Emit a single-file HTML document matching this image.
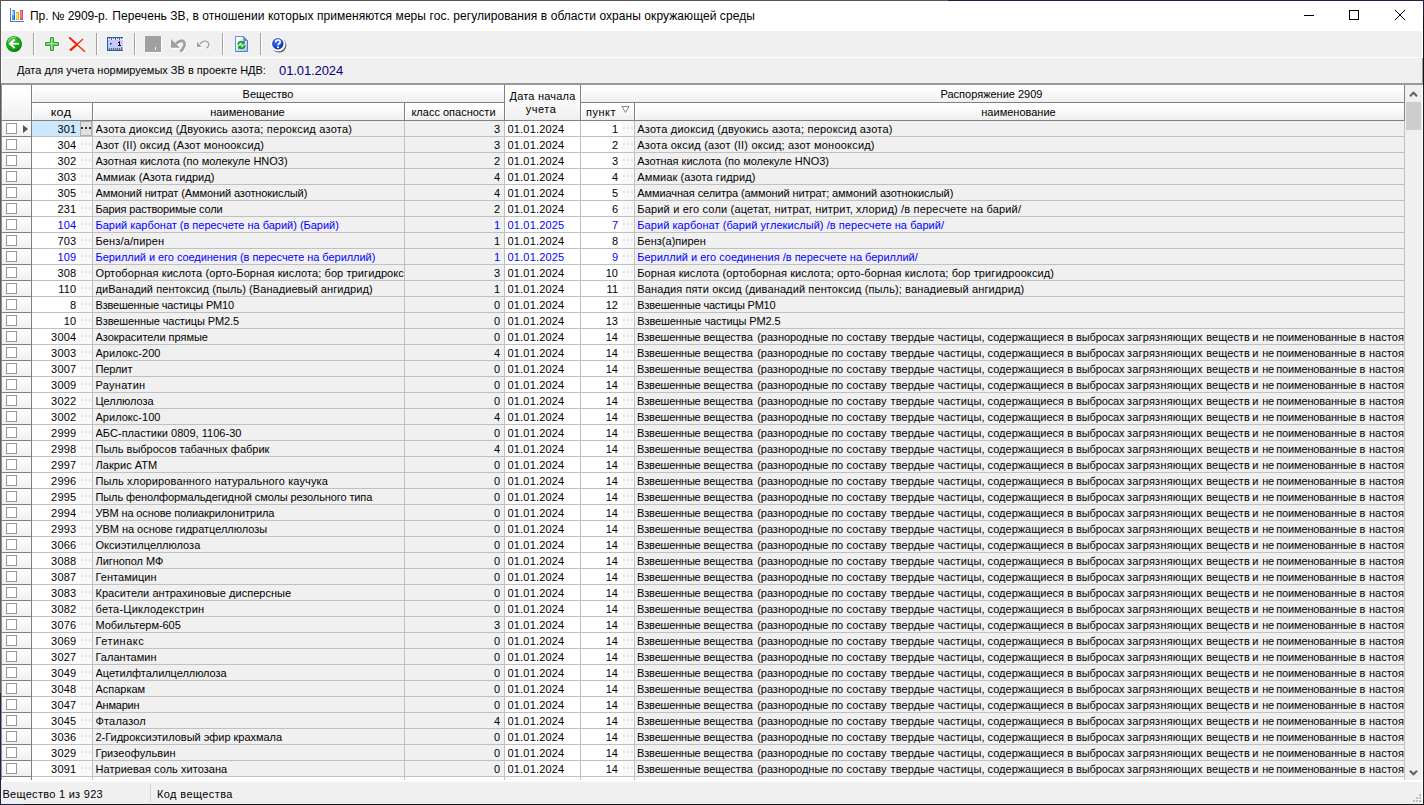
<!DOCTYPE html><html><head><meta charset="utf-8"><title>Пр. № 2909-р</title><style>*{margin:0;padding:0;box-sizing:border-box}
html,body{width:1424px;height:805px;overflow:hidden;background:#f0f0f0}
body{position:relative;font-family:"Liberation Sans",sans-serif;font-size:11px;color:#000;line-height:16px}
.a{position:absolute}
i{position:absolute;display:block;font-style:normal}
span{position:absolute;white-space:nowrap;overflow:hidden}
#tb{left:1px;top:1px;width:1422px;height:30px;background:#fff}
#title{left:30px;top:8px;letter-spacing:0.038px;font-size:12px;line-height:16px;height:16px}
.sep{width:2px;height:22px;top:33px;background:linear-gradient(90deg,#a0a0a0 50%,#fff 50%)}
/* grid */
.hl{background:#808080}
.hc{background:linear-gradient(#ffffff,#fcfcfc 30%,#efefef);border-top:1px solid #fff;border-left:1px solid #fff;text-align:center}
.ht{text-align:center;line-height:13px;overflow:visible}
.r{position:absolute;left:0;width:1424px;height:15px}
.r span{top:0;height:15px;line-height:16px}
.c1{left:32px;width:44.400px;text-align:right;letter-spacing:0.2px}
.c2{left:95.5px;width:308.500px}
.c3{left:405px;width:95px;text-align:right}
.c4{left:507.500px;width:70px;letter-spacing:0.18px}
.c5{left:581px;width:37px;text-align:right}
.c6{left:637.300px;width:766.700px}
.b span{color:#0000ff}
.cb{left:6px;top:2px;width:11px;height:11px;border:1px solid #989898;background:#fff}
.arr{left:23px;top:3.500px;width:0;height:0;border-left:5px solid #555;border-top:4.5px solid transparent;border-bottom:4.5px solid transparent}
.e1,.e2{top:0;width:12px;height:15px;background:#f9f9f9}
.e1{left:80px}.e2{left:622px}
.e1:after,.e2:after{content:"";position:absolute;left:1px;top:6px;width:2px;height:2px;background:#e4e4e4;box-shadow:4px 0 0 #e4e4e4,8px 0 0 #e4e4e4}
.sel .c1{background:#cce8ff;left:32px;width:48px;padding-right:3.600px}
.sel .e1{background:#e1e1e1;border:1px solid #adadad}
.sel .e1:after{left:0;top:5px;background:#333;box-shadow:4px 0 0 #333,8px 0 0 #333}
.c6 b{position:absolute;top:0;font-weight:normal}
.w0{left:-0.2px;letter-spacing:-0.19px}
.w1{left:66.2px;letter-spacing:0.00px}
.w2{left:119.9px;letter-spacing:-0.03px}
.w3{left:194.1px;letter-spacing:-0.30px}
.w4{left:209.2px;letter-spacing:0.12px}
.w5{left:253.2px;letter-spacing:0.12px}
.w6{left:300.5px;letter-spacing:0.15px}
.w7{left:350.3px;letter-spacing:-0.00px}
.w8{left:430.0px;letter-spacing:0.00px}
.w9{left:438.8px;letter-spacing:-0.15px}
.w10{left:489.6px;letter-spacing:0.22px}
.w11{left:568.9px;letter-spacing:0.06px}
.w12{left:615.0px;letter-spacing:0.00px}
.w13{left:625.0px;letter-spacing:-0.30px}
.w14{left:639.0px;letter-spacing:-0.15px}
.w15{left:722.3px;letter-spacing:0.00px}
.w16{left:731.6px;letter-spacing:0.07px}
</style></head><body>
<!-- window frame -->
<div class="a" style="left:0;top:0;width:1424px;height:1px;background:linear-gradient(90deg,#555 0,#555 948px,#1c2340 948px)"></div>
<div class="a" style="left:0;top:0;width:1px;height:805px;background:linear-gradient(#5c5c5c 0,#606060 693px,#1c2340 693px)"></div>
<div class="a" style="left:1423px;top:0;width:1px;height:805px;background:linear-gradient(#1a2040 0,#1a2040 16px,#111 17px,#111 86px,#14201a 87px)"></div>
<div class="a" style="left:0;top:804px;width:1424px;height:1px;background:linear-gradient(90deg,#1c2340 0,#1c2340 24px,#151515 24px)"></div>
<!-- title bar -->
<div id="tb" class="a"></div>
<span id="title" style="letter-spacing:-0.08px">Пр. № 2909-р.</span><span id="title2" style="left:112.300px;top:8px;font-size:12px;line-height:16px;height:16px;letter-spacing:0.068px">Перечень ЗВ, в отношении которых применяются меры гос. регулирования в области охраны окружающей среды</span>
<svg class="a" style="left:8px;top:6px" width="18" height="18" viewBox="0 0 18 18" shape-rendering="crispEdges"><rect x="2" y="2" width="1" height="14" fill="#3c82d2"/><rect x="2" y="15" width="14" height="1" fill="#3c82d2"/>
<rect x="4" y="4" width="3" height="10" fill="#3c86dc"/><rect x="4" y="5" width="1" height="4" fill="#a8dcff"/><rect x="5" y="5" width="1" height="4" fill="#7cc0f8"/><rect x="4" y="9" width="2" height="5" fill="#4a98e8"/><rect x="6" y="10" width="1" height="4" fill="#2c5c98"/>
<rect x="8" y="6" width="3" height="8" fill="#d8a838"/><rect x="9" y="7" width="1" height="7" fill="#ffe858"/><rect x="8" y="7" width="1" height="6" fill="#f8d048"/>
<rect x="12" y="4" width="3" height="10" fill="#c84868"/><rect x="13" y="5" width="1" height="8" fill="#f08aa0"/><rect x="12" y="5" width="1" height="7" fill="#e06884"/></svg>
<svg class="a" style="left:1290px;top:1px" width="132" height="30" viewBox="0 0 132 30"><path d="M14 14.500h10" stroke="#000" stroke-width="1"/><rect x="59.500" y="9.500" width="9" height="9" fill="none" stroke="#000" stroke-width="1"/><path d="M105 9l10 10M115 9l-10 10" stroke="#000" stroke-width="1"/></svg>
<!-- toolbar -->
<div class="a" style="left:1px;top:57px;width:1421px;height:1px;background:#fff"></div>
<div class="a" style="left:1px;top:58px;width:1px;height:25px;background:#fff"></div>
<i class="sep" style="left:33px"></i><i class="sep" style="left:96px"></i><i class="sep" style="left:134px"></i><i class="sep" style="left:222px"></i><i class="sep" style="left:260px"></i>
<svg class="a" style="left:5px;top:35px" width="18" height="18" viewBox="0 0 18 18"><defs><radialGradient id="gg" cx="0.38" cy="0.25" r="0.75"><stop offset="0" stop-color="#58c848"/><stop offset="0.55" stop-color="#18a818"/><stop offset="0.85" stop-color="#0c9a0c"/><stop offset="1" stop-color="#086808"/></radialGradient></defs><circle cx="9" cy="9" r="8.600" fill="#fff" opacity="0.600"/><circle cx="9" cy="9" r="8" fill="url(#gg)"/><path d="M3.500 6.500a6 6 0 0 1 7-4" stroke="#b8f0a8" stroke-width="1" fill="none" opacity="0.700"/><path d="M9.700 4.500L4.900 8.750L9.700 13" stroke="#fff" stroke-width="2" fill="none"/><path d="M5 8.750h9" stroke="#fff" stroke-width="1.700"/></svg>
<svg class="a" style="left:44px;top:36px" width="16" height="16" viewBox="0 0 16 16"><path d="M6.500 1.500h3v5h5v3h-5v5h-3v-5h-5v-3h5z" fill="#6cdc6c" stroke="#fff" stroke-width="2.400" opacity="0.500"/><path d="M6.500 1.500h3v5h5v3h-5v5h-3v-5h-5v-3h5z" fill="#62d662" stroke="#34a034" stroke-width="1" stroke-linejoin="round"/><path d="M7.500 2.500v11M2.500 7.500h11" stroke="#98ec98" stroke-width="1"/></svg>
<svg class="a" style="left:68px;top:36px" width="19" height="17" viewBox="0 0 19 17"><g fill="#ee2200" stroke="none"><path d="M0.500 2L1.900 0.700L10 8L8.600 9.400z"/><path d="M8.300 7.700L9.900 9.100L2.900 15.300L1.200 13.500z"/></g><path d="M9 8.500L17 15.800" stroke="#ee2200" stroke-width="1.200"/><path d="M15 3L9 8.500" stroke="#ee2200" stroke-width="1.100"/></svg>
<svg class="a" style="left:106px;top:36px" width="18" height="16" viewBox="0 0 18 16" shape-rendering="crispEdges"><rect x="0" y="0" width="18" height="16" fill="#fff8f0" opacity="0.800"/><g transform="translate(1 1)"><rect x="0" y="0" width="16" height="14" fill="#c8c8ff"/><rect x="1" y="1" width="15" height="2" fill="#e8e8ff"/><rect x="1" y="11" width="15" height="2" fill="#b8b8f8"/><rect x="0" y="0" width="16" height="1" fill="#0060d0"/><rect x="0" y="0" width="1" height="14" fill="#0060d0"/><rect x="0" y="13" width="16" height="1" fill="#0060d0"/>
<g fill="#706850"><rect x="2" y="1" width="1" height="1"/><rect x="4" y="1" width="1" height="2"/><rect x="6" y="1" width="1" height="1"/><rect x="8" y="1" width="1" height="2"/><rect x="10" y="1" width="1" height="1"/><rect x="12" y="1" width="1" height="2"/><rect x="14" y="1" width="1" height="1"/>
<rect x="2" y="11" width="1" height="2"/><rect x="4" y="11" width="1" height="2"/><rect x="6" y="11" width="1" height="2"/><rect x="8" y="11" width="1" height="2"/><rect x="10" y="11" width="1" height="2"/><rect x="12" y="11" width="1" height="2"/><rect x="14" y="10" width="1" height="3"/></g>
<g fill="#000"><rect x="12" y="4" width="1" height="5"/><rect x="11" y="5" width="1" height="1"/><rect x="11" y="8" width="3" height="1"/></g><rect x="12" y="4" width="1" height="1" fill="#404060"/><rect x="3" y="6" width="2" height="1" fill="#0060d0"/><rect x="3" y="7" width="1" height="1" fill="#0060d0"/></g></svg>
<svg class="a" style="left:145px;top:36px" width="18" height="18" viewBox="0 0 18 18" shape-rendering="crispEdges"><rect x="1" y="1" width="16" height="16" fill="#fff"/><rect width="16" height="16" fill="#a0a0a0"/><rect x="10" y="11" width="1" height="3" fill="#fff"/></svg>
<svg class="a" style="left:170px;top:38px" width="18" height="16" viewBox="0 0 18 16"><g transform="translate(1 1)" fill="#fff" stroke="#fff"><path d="M1 1v8.800h8.800z" stroke="none"/><path d="M6 6C8.500 3 11 2.600 12.500 2.900C14.500 3.500 15 6 14.300 8C13.600 10 12.300 12 10.400 13.700" fill="none" stroke-width="2.700"/></g><g fill="#a0a0a0" stroke="#a0a0a0"><path d="M1 1v8.800h8.800z" stroke="none"/><path d="M6 6C8.500 3 11 2.600 12.500 2.900C14.500 3.500 15 6 14.300 8C13.600 10 12.300 12 10.400 13.700" fill="none" stroke-width="2.700"/></g></svg>
<svg class="a" style="left:196px;top:40px" width="16" height="11" viewBox="0 0 16 11"><g transform="translate(1 1)" fill="#fff" stroke="#fff"><path d="M1 2v5h4.800z" stroke="none"/><path d="M4 4C6 1.500 9 0.800 11 1.600C13 2.500 13.300 5 12.500 6.200C12 7 11.500 7.500 10.600 8.100" fill="none" stroke-width="1.300"/></g><g fill="#a0a0a0" stroke="#a0a0a0"><path d="M1 2v5h4.800z" stroke="none"/><path d="M4 4C6 1.500 9 0.800 11 1.600C13 2.500 13.300 5 12.500 6.200C12 7 11.500 7.500 10.600 8.100" fill="none" stroke-width="1.300"/></g></svg>
<svg class="a" style="left:235px;top:36px" width="13" height="16" viewBox="0 0 13 16"><defs><linearGradient id="dg" x1="0" y1="0" x2="1" y2="1"><stop offset="0.200" stop-color="#ffffff"/><stop offset="1" stop-color="#8cc8f4"/></linearGradient></defs><path d="M0.500 0.500h8l4 4v11h-12z" fill="url(#dg)" stroke="#6a6cc4"/><path d="M0.500 15.500v-15h8" fill="none" stroke="#6c8cdc"/><path d="M8.500 0.500v4h4z" fill="#58a8f0" stroke="#6a6cc4" stroke-width="0.600"/><path d="M2.300 8.800C2.300 5.200 6.500 3.800 8.500 5.600L9.700 4.200V8.300H5.700L7.200 6.900C6 6 4.200 7 4.300 8.800zM10.600 9.300C10.600 12.900 6.400 14.300 4.400 12.500L3.200 13.900V9.800H7.200L5.700 11.200C6.900 12.100 8.700 11.100 8.600 9.300z" fill="#10a010"/></svg>
<svg class="a" style="left:269.4px;top:35.2px" width="19" height="19" viewBox="0 0 19 19"><defs><radialGradient id="bg" cx="0.400" cy="0.300" r="0.800"><stop offset="0" stop-color="#4a78e8"/><stop offset="0.700" stop-color="#1440c8"/><stop offset="1" stop-color="#0c2c98"/></radialGradient></defs><circle cx="10" cy="10.300" r="7.300" fill="#484848"/><circle cx="9.200" cy="9.300" r="7.300" fill="#fff"/><circle cx="8.800" cy="8.700" r="5.700" fill="url(#bg)"/><path d="M6.700 7.200C6.700 4.300 11.200 4.300 11.200 6.900C11.200 8.500 9.200 8.600 9.100 10.200" stroke="#fff" stroke-width="1.700" fill="none"/><circle cx="9" cy="12.200" r="1" fill="#fff"/></svg>
<!-- date panel -->
<span style="left:17px;top:62px;height:16px">Дата для учета нормируемых ЗВ в проекте НДВ:</span>
<span style="left:279px;top:62px;height:18px;font-size:13px;line-height:18px;color:#000080;letter-spacing:-0.1px">01.01.2024</span>
<!-- grid frame -->
<div class="a" style="left:1px;top:83px;width:1421px;height:2px;background:#999"></div>
<div class="a" style="left:1px;top:85px;width:1px;height:696px;background:#8e8e8e"></div>
<div class="a" style="left:1422px;top:31px;width:1px;height:773px;background:linear-gradient(#fff 0,#fff 27px,#a0a0a0 27px,#a0a0a0 54px,#fff 54px)"></div>
<!-- data area bg -->
<div class="a" style="left:2px;top:121px;width:1402px;height:659px;background:#fff"></div>
<div class="a" style="left:93px;top:121px;width:311px;height:656px;background:#f0f0f0"></div>
<div class="a" style="left:405px;top:121px;width:99px;height:656px;background:#f0f0f0"></div>
<div class="a" style="left:635px;top:121px;width:769px;height:656px;background:#f0f0f0"></div>
<div class="a" style="left:80px;top:121px;width:12px;height:656px;background:#f9f9f9"></div>
<div class="a" style="left:622px;top:121px;width:12px;height:656px;background:#f9f9f9"></div>
<!-- indicator col gradient cells + h lines -->
<div class="a" style="left:2px;top:121px;width:29px;height:659px;background:repeating-linear-gradient(#fff 0,#fdfdfd 2px,#f0f0f0 15px,#808080 15px,#808080 16px)"></div>
<div class="a" style="left:32px;top:121px;width:1372px;height:656px;background:repeating-linear-gradient(transparent 0,transparent 15px,#c0c0c0 15px,#c0c0c0 16px)"></div>
<!-- v lines data -->
<i style="left:92px;top:121px;width:1px;height:659px;background:#c0c0c0"></i>
<i style="left:404px;top:121px;width:1px;height:659px;background:#c0c0c0"></i>
<i style="left:504px;top:121px;width:1px;height:659px;background:#c0c0c0"></i>
<i style="left:580px;top:121px;width:1px;height:659px;background:#c0c0c0"></i>
<i style="left:634px;top:121px;width:1px;height:659px;background:#c0c0c0"></i>
<i style="left:1404px;top:85px;width:1px;height:695px;background:#c0c0c0"></i>
<i class="hl" style="left:31px;top:85px;width:1px;height:695px"></i>
<!-- header -->
<div class="a hc" style="left:2px;top:85px;width:29px;height:35px"></div>
<div class="a hc" style="left:32px;top:85px;width:472px;height:17px"></div>
<div class="a hc" style="left:32px;top:103px;width:60px;height:17px"></div>
<div class="a hc" style="left:93px;top:103px;width:311px;height:17px"></div>
<div class="a hc" style="left:405px;top:103px;width:99px;height:17px"></div>
<div class="a hc" style="left:505px;top:85px;width:75px;height:35px"></div>
<div class="a hc" style="left:581px;top:85px;width:823px;height:17px"></div>
<div class="a hc" style="left:581px;top:103px;width:53px;height:17px"></div>
<div class="a hc" style="left:635px;top:103px;width:769px;height:17px"></div>
<i class="hl" style="left:2px;top:120px;width:1403px;height:1px"></i>
<i class="hl" style="left:32px;top:102px;width:472px;height:1px"></i>
<i class="hl" style="left:581px;top:102px;width:824px;height:1px"></i>
<i class="hl" style="left:92px;top:103px;width:1px;height:18px"></i>
<i class="hl" style="left:404px;top:103px;width:1px;height:18px"></i>
<i class="hl" style="left:504px;top:85px;width:1px;height:36px"></i>
<i class="hl" style="left:580px;top:85px;width:1px;height:36px"></i>
<i class="hl" style="left:634px;top:103px;width:1px;height:18px"></i>
<i class="hl" style="left:1404px;top:85px;width:1px;height:36px"></i>
<span class="ht" style="left:32px;top:88px;width:472px;height:14px">Вещество</span>
<span class="ht" style="left:32px;top:106px;width:58px;height:14px;transform:scaleX(1.14);letter-spacing:0.3px">код</span>
<span class="ht" style="left:92px;top:106px;width:311px;height:14px">наименование</span>
<span class="ht" style="left:404px;top:106px;width:99px;height:14px">класс опасности</span>
<span class="ht" style="left:505px;top:90px;width:75px;height:28px;white-space:normal"><b style="font-weight:normal;letter-spacing:0.2px">Дата начала</b><br><b style="font-weight:normal;letter-spacing:0.5px;margin-left:-3px">учета</b></span>
<span class="ht" style="left:580px;top:88px;width:823px;height:14px">Распоряжение 2909</span>
<span class="ht" style="left:586px;top:106px;width:40px;height:14px;text-align:left;letter-spacing:0.5px">пункт</span>
<svg class="a" style="left:621px;top:105.300px" width="9" height="9" viewBox="0 0 9 9"><path d="M1 1.500h7l-3.500 6z" fill="#fff" stroke="#808080" stroke-width="1"/></svg>
<span class="ht" style="left:634px;top:106px;width:769px;height:14px">наименование</span>
<!-- scrollbar -->
<div class="a" style="left:1405px;top:85px;width:17px;height:696px;background:#f0f0f0"></div>
<div class="a" style="left:1406px;top:102px;width:15px;height:28px;background:#cdcdcd"></div>
<svg class="a" style="left:1409px;top:90px" width="9" height="8" viewBox="0 0 9 8"><path d="M1 6.200L4.500 2.700L8 6.200" stroke="#606060" stroke-width="2" fill="none"/></svg>
<svg class="a" style="left:1409px;top:768px" width="9" height="9" viewBox="0 0 9 9"><path d="M1 2.800L4.500 6.300L8 2.800" stroke="#606060" stroke-width="2" fill="none"/></svg>

<div id="rows">
<div class="r sel" style="top:121px"><i class="cb"></i><i class="arr"></i><span class="c1">301</span><i class="e1"></i><span class="c2" style="letter-spacing:0.227px">Азота диоксид (Двуокись азота; пероксид азота)</span><span class="c3">3</span><span class="c4">01.01.2024</span><span class="c5">1</span><i class="e2"></i><span class="c6" style="letter-spacing:0.222px">Азота диоксид (двуокись азота; пероксид азота)</span></div>
<div class="r" style="top:137px"><i class="cb"></i><span class="c1">304</span><i class="e1"></i><span class="c2" style="letter-spacing:0.161px">Азот (II) оксид (Азот монооксид)</span><span class="c3">3</span><span class="c4">01.01.2024</span><span class="c5">2</span><i class="e2"></i><span class="c6" style="letter-spacing:0.205px">Азота оксид (азот (II) оксид; азот монооксид)</span></div>
<div class="r" style="top:153px"><i class="cb"></i><span class="c1">302</span><i class="e1"></i><span class="c2">Азотная кислота (по молекуле HNO3)</span><span class="c3">2</span><span class="c4">01.01.2024</span><span class="c5">3</span><i class="e2"></i><span class="c6" style="letter-spacing:-0.012px">Азотная кислота (по молекуле HNO3)</span></div>
<div class="r" style="top:169px"><i class="cb"></i><span class="c1">303</span><i class="e1"></i><span class="c2" style="letter-spacing:0.080px">Аммиак (Азота гидрид)</span><span class="c3">4</span><span class="c4">01.01.2024</span><span class="c5">4</span><i class="e2"></i><span class="c6" style="letter-spacing:0.100px">Аммиак (азота гидрид)</span></div>
<div class="r" style="top:185px"><i class="cb"></i><span class="c1">305</span><i class="e1"></i><span class="c2" style="letter-spacing:-0.106px">Аммоний нитрат (Аммоний азотнокислый)</span><span class="c3">4</span><span class="c4">01.01.2024</span><span class="c5">5</span><i class="e2"></i><span class="c6" style="letter-spacing:-0.105px">Аммиачная селитра (аммоний нитрат; аммоний азотнокислый)</span></div>
<div class="r" style="top:201px"><i class="cb"></i><span class="c1">231</span><i class="e1"></i><span class="c2" style="letter-spacing:-0.143px">Бария растворимые соли</span><span class="c3">2</span><span class="c4">01.01.2024</span><span class="c5">6</span><i class="e2"></i><span class="c6" style="letter-spacing:0.180px">Барий и его соли (ацетат, нитрат, нитрит, хлорид) /в пересчете на барий/</span></div>
<div class="r b" style="top:217px"><i class="cb"></i><span class="c1">104</span><i class="e1"></i><span class="c2" style="letter-spacing:-0.014px">Барий карбонат (в пересчете на барий) (Барий)</span><span class="c3">1</span><span class="c4">01.01.2025</span><span class="c5">7</span><i class="e2"></i><span class="c6" style="letter-spacing:0.062px">Барий карбонат (барий углекислый) /в пересчете на барий/</span></div>
<div class="r" style="top:233px"><i class="cb"></i><span class="c1">703</span><i class="e1"></i><span class="c2" style="letter-spacing:0.127px">Бенз/а/пирен</span><span class="c3">1</span><span class="c4">01.01.2024</span><span class="c5">8</span><i class="e2"></i><span class="c6" style="letter-spacing:0.018px">Бенз(а)пирен</span></div>
<div class="r b" style="top:249px"><i class="cb"></i><span class="c1">109</span><i class="e1"></i><span class="c2" style="letter-spacing:-0.044px">Бериллий и его соединения (в пересчете на бериллий)</span><span class="c3">1</span><span class="c4">01.01.2025</span><span class="c5">9</span><i class="e2"></i><span class="c6" style="letter-spacing:-0.008px">Бериллий и его соединения /в пересчете на бериллий/</span></div>
<div class="r" style="top:265px"><i class="cb"></i><span class="c1">308</span><i class="e1"></i><span class="c2" style="letter-spacing:0.093px">Ортоборная кислота (орто-Борная кислота; бор тригидрокс</span><span class="c3">3</span><span class="c4">01.01.2024</span><span class="c5">10</span><i class="e2"></i><span class="c6" style="letter-spacing:0.103px">Борная кислота (ортоборная кислота; орто-борная кислота; бор тригидрооксид)</span></div>
<div class="r" style="top:281px"><i class="cb"></i><span class="c1">110</span><i class="e1"></i><span class="c2" style="letter-spacing:0.072px">диВанадий пентоксид (пыль) (Ванадиевый ангидрид)</span><span class="c3">1</span><span class="c4">01.01.2024</span><span class="c5">11</span><i class="e2"></i><span class="c6" style="letter-spacing:0.116px">Ванадия пяти оксид (диванадий пентоксид (пыль); ванадиевый ангидрид)</span></div>
<div class="r" style="top:297px"><i class="cb"></i><span class="c1">8</span><i class="e1"></i><span class="c2" style="letter-spacing:-0.200px">Взвешенные частицы PM10</span><span class="c3">0</span><span class="c4">01.01.2024</span><span class="c5">12</span><i class="e2"></i><span class="c6" style="letter-spacing:-0.209px">Взвешенные частицы PM10</span></div>
<div class="r" style="top:313px"><i class="cb"></i><span class="c1">10</span><i class="e1"></i><span class="c2" style="letter-spacing:-0.104px">Взвешенные частицы PM2.5</span><span class="c3">0</span><span class="c4">01.01.2024</span><span class="c5">13</span><i class="e2"></i><span class="c6" style="letter-spacing:-0.113px">Взвешенные частицы PM2.5</span></div>
<div class="r" style="top:329px"><i class="cb"></i><span class="c1">3004</span><i class="e1"></i><span class="c2" style="letter-spacing:-0.022px">Азокрасители прямые</span><span class="c3">0</span><span class="c4">01.01.2024</span><span class="c5">14</span><i class="e2"></i><span class="c6"><b class="w0">Взвешенные</b><b class="w1">вещества</b><b class="w2">(разнородные</b><b class="w3">по</b><b class="w4">составу</b><b class="w5">твердые</b><b class="w6">частицы,</b><b class="w7">содержащиеся</b><b class="w8">в</b><b class="w9">выбросах</b><b class="w10">загрязняющих</b><b class="w11">веществ</b><b class="w12">и</b><b class="w13">не</b><b class="w14">поименованные</b><b class="w15">в</b><b class="w16">настоя</b></span></div>
<div class="r" style="top:345px"><i class="cb"></i><span class="c1">3003</span><i class="e1"></i><span class="c2" style="letter-spacing:0.020px">Арилокс-200</span><span class="c3">4</span><span class="c4">01.01.2024</span><span class="c5">14</span><i class="e2"></i><span class="c6"><b class="w0">Взвешенные</b><b class="w1">вещества</b><b class="w2">(разнородные</b><b class="w3">по</b><b class="w4">составу</b><b class="w5">твердые</b><b class="w6">частицы,</b><b class="w7">содержащиеся</b><b class="w8">в</b><b class="w9">выбросах</b><b class="w10">загрязняющих</b><b class="w11">веществ</b><b class="w12">и</b><b class="w13">не</b><b class="w14">поименованные</b><b class="w15">в</b><b class="w16">настоя</b></span></div>
<div class="r" style="top:361px"><i class="cb"></i><span class="c1">3007</span><i class="e1"></i><span class="c2" style="letter-spacing:-0.080px">Перлит</span><span class="c3">0</span><span class="c4">01.01.2024</span><span class="c5">14</span><i class="e2"></i><span class="c6"><b class="w0">Взвешенные</b><b class="w1">вещества</b><b class="w2">(разнородные</b><b class="w3">по</b><b class="w4">составу</b><b class="w5">твердые</b><b class="w6">частицы,</b><b class="w7">содержащиеся</b><b class="w8">в</b><b class="w9">выбросах</b><b class="w10">загрязняющих</b><b class="w11">веществ</b><b class="w12">и</b><b class="w13">не</b><b class="w14">поименованные</b><b class="w15">в</b><b class="w16">настоя</b></span></div>
<div class="r" style="top:377px"><i class="cb"></i><span class="c1">3009</span><i class="e1"></i><span class="c2" style="letter-spacing:0.286px">Раунатин</span><span class="c3">0</span><span class="c4">01.01.2024</span><span class="c5">14</span><i class="e2"></i><span class="c6"><b class="w0">Взвешенные</b><b class="w1">вещества</b><b class="w2">(разнородные</b><b class="w3">по</b><b class="w4">составу</b><b class="w5">твердые</b><b class="w6">частицы,</b><b class="w7">содержащиеся</b><b class="w8">в</b><b class="w9">выбросах</b><b class="w10">загрязняющих</b><b class="w11">веществ</b><b class="w12">и</b><b class="w13">не</b><b class="w14">поименованные</b><b class="w15">в</b><b class="w16">настоя</b></span></div>
<div class="r" style="top:393px"><i class="cb"></i><span class="c1">3022</span><i class="e1"></i><span class="c2" style="letter-spacing:-0.050px">Целлюлоза</span><span class="c3">0</span><span class="c4">01.01.2024</span><span class="c5">14</span><i class="e2"></i><span class="c6"><b class="w0">Взвешенные</b><b class="w1">вещества</b><b class="w2">(разнородные</b><b class="w3">по</b><b class="w4">составу</b><b class="w5">твердые</b><b class="w6">частицы,</b><b class="w7">содержащиеся</b><b class="w8">в</b><b class="w9">выбросах</b><b class="w10">загрязняющих</b><b class="w11">веществ</b><b class="w12">и</b><b class="w13">не</b><b class="w14">поименованные</b><b class="w15">в</b><b class="w16">настоя</b></span></div>
<div class="r" style="top:409px"><i class="cb"></i><span class="c1">3002</span><i class="e1"></i><span class="c2" style="letter-spacing:0.020px">Арилокс-100</span><span class="c3">4</span><span class="c4">01.01.2024</span><span class="c5">14</span><i class="e2"></i><span class="c6"><b class="w0">Взвешенные</b><b class="w1">вещества</b><b class="w2">(разнородные</b><b class="w3">по</b><b class="w4">составу</b><b class="w5">твердые</b><b class="w6">частицы,</b><b class="w7">содержащиеся</b><b class="w8">в</b><b class="w9">выбросах</b><b class="w10">загрязняющих</b><b class="w11">веществ</b><b class="w12">и</b><b class="w13">не</b><b class="w14">поименованные</b><b class="w15">в</b><b class="w16">настоя</b></span></div>
<div class="r" style="top:425px"><i class="cb"></i><span class="c1">2999</span><i class="e1"></i><span class="c2" style="letter-spacing:0.024px">АБС-пластики 0809, 1106-30</span><span class="c3">0</span><span class="c4">01.01.2024</span><span class="c5">14</span><i class="e2"></i><span class="c6"><b class="w0">Взвешенные</b><b class="w1">вещества</b><b class="w2">(разнородные</b><b class="w3">по</b><b class="w4">составу</b><b class="w5">твердые</b><b class="w6">частицы,</b><b class="w7">содержащиеся</b><b class="w8">в</b><b class="w9">выбросах</b><b class="w10">загрязняющих</b><b class="w11">веществ</b><b class="w12">и</b><b class="w13">не</b><b class="w14">поименованные</b><b class="w15">в</b><b class="w16">настоя</b></span></div>
<div class="r" style="top:441px"><i class="cb"></i><span class="c1">2998</span><i class="e1"></i><span class="c2" style="letter-spacing:0.007px">Пыль выбросов табачных фабрик</span><span class="c3">4</span><span class="c4">01.01.2024</span><span class="c5">14</span><i class="e2"></i><span class="c6"><b class="w0">Взвешенные</b><b class="w1">вещества</b><b class="w2">(разнородные</b><b class="w3">по</b><b class="w4">составу</b><b class="w5">твердые</b><b class="w6">частицы,</b><b class="w7">содержащиеся</b><b class="w8">в</b><b class="w9">выбросах</b><b class="w10">загрязняющих</b><b class="w11">веществ</b><b class="w12">и</b><b class="w13">не</b><b class="w14">поименованные</b><b class="w15">в</b><b class="w16">настоя</b></span></div>
<div class="r" style="top:457px"><i class="cb"></i><span class="c1">2997</span><i class="e1"></i><span class="c2" style="letter-spacing:0.044px">Лакрис АТМ</span><span class="c3">0</span><span class="c4">01.01.2024</span><span class="c5">14</span><i class="e2"></i><span class="c6"><b class="w0">Взвешенные</b><b class="w1">вещества</b><b class="w2">(разнородные</b><b class="w3">по</b><b class="w4">составу</b><b class="w5">твердые</b><b class="w6">частицы,</b><b class="w7">содержащиеся</b><b class="w8">в</b><b class="w9">выбросах</b><b class="w10">загрязняющих</b><b class="w11">веществ</b><b class="w12">и</b><b class="w13">не</b><b class="w14">поименованные</b><b class="w15">в</b><b class="w16">настоя</b></span></div>
<div class="r" style="top:473px"><i class="cb"></i><span class="c1">2996</span><i class="e1"></i><span class="c2" style="letter-spacing:0.118px">Пыль хлорированного натурального каучука</span><span class="c3">0</span><span class="c4">01.01.2024</span><span class="c5">14</span><i class="e2"></i><span class="c6"><b class="w0">Взвешенные</b><b class="w1">вещества</b><b class="w2">(разнородные</b><b class="w3">по</b><b class="w4">составу</b><b class="w5">твердые</b><b class="w6">частицы,</b><b class="w7">содержащиеся</b><b class="w8">в</b><b class="w9">выбросах</b><b class="w10">загрязняющих</b><b class="w11">веществ</b><b class="w12">и</b><b class="w13">не</b><b class="w14">поименованные</b><b class="w15">в</b><b class="w16">настоя</b></span></div>
<div class="r" style="top:489px"><i class="cb"></i><span class="c1">2995</span><i class="e1"></i><span class="c2" style="letter-spacing:-0.109px">Пыль фенолформальдегидной смолы резольного типа</span><span class="c3">0</span><span class="c4">01.01.2024</span><span class="c5">14</span><i class="e2"></i><span class="c6"><b class="w0">Взвешенные</b><b class="w1">вещества</b><b class="w2">(разнородные</b><b class="w3">по</b><b class="w4">составу</b><b class="w5">твердые</b><b class="w6">частицы,</b><b class="w7">содержащиеся</b><b class="w8">в</b><b class="w9">выбросах</b><b class="w10">загрязняющих</b><b class="w11">веществ</b><b class="w12">и</b><b class="w13">не</b><b class="w14">поименованные</b><b class="w15">в</b><b class="w16">настоя</b></span></div>
<div class="r" style="top:505px"><i class="cb"></i><span class="c1">2994</span><i class="e1"></i><span class="c2" style="letter-spacing:-0.133px">УВМ на основе полиакрилонитрила</span><span class="c3">0</span><span class="c4">01.01.2024</span><span class="c5">14</span><i class="e2"></i><span class="c6"><b class="w0">Взвешенные</b><b class="w1">вещества</b><b class="w2">(разнородные</b><b class="w3">по</b><b class="w4">составу</b><b class="w5">твердые</b><b class="w6">частицы,</b><b class="w7">содержащиеся</b><b class="w8">в</b><b class="w9">выбросах</b><b class="w10">загрязняющих</b><b class="w11">веществ</b><b class="w12">и</b><b class="w13">не</b><b class="w14">поименованные</b><b class="w15">в</b><b class="w16">настоя</b></span></div>
<div class="r" style="top:521px"><i class="cb"></i><span class="c1">2993</span><i class="e1"></i><span class="c2" style="letter-spacing:-0.029px">УВМ на основе гидратцеллюлозы</span><span class="c3">0</span><span class="c4">01.01.2024</span><span class="c5">14</span><i class="e2"></i><span class="c6"><b class="w0">Взвешенные</b><b class="w1">вещества</b><b class="w2">(разнородные</b><b class="w3">по</b><b class="w4">составу</b><b class="w5">твердые</b><b class="w6">частицы,</b><b class="w7">содержащиеся</b><b class="w8">в</b><b class="w9">выбросах</b><b class="w10">загрязняющих</b><b class="w11">веществ</b><b class="w12">и</b><b class="w13">не</b><b class="w14">поименованные</b><b class="w15">в</b><b class="w16">настоя</b></span></div>
<div class="r" style="top:537px"><i class="cb"></i><span class="c1">3066</span><i class="e1"></i><span class="c2" style="letter-spacing:0.012px">Оксиэтилцеллюлоза</span><span class="c3">0</span><span class="c4">01.01.2024</span><span class="c5">14</span><i class="e2"></i><span class="c6"><b class="w0">Взвешенные</b><b class="w1">вещества</b><b class="w2">(разнородные</b><b class="w3">по</b><b class="w4">составу</b><b class="w5">твердые</b><b class="w6">частицы,</b><b class="w7">содержащиеся</b><b class="w8">в</b><b class="w9">выбросах</b><b class="w10">загрязняющих</b><b class="w11">веществ</b><b class="w12">и</b><b class="w13">не</b><b class="w14">поименованные</b><b class="w15">в</b><b class="w16">настоя</b></span></div>
<div class="r" style="top:553px"><i class="cb"></i><span class="c1">3088</span><i class="e1"></i><span class="c2" style="letter-spacing:-0.040px">Лигнопол МФ</span><span class="c3">0</span><span class="c4">01.01.2024</span><span class="c5">14</span><i class="e2"></i><span class="c6"><b class="w0">Взвешенные</b><b class="w1">вещества</b><b class="w2">(разнородные</b><b class="w3">по</b><b class="w4">составу</b><b class="w5">твердые</b><b class="w6">частицы,</b><b class="w7">содержащиеся</b><b class="w8">в</b><b class="w9">выбросах</b><b class="w10">загрязняющих</b><b class="w11">веществ</b><b class="w12">и</b><b class="w13">не</b><b class="w14">поименованные</b><b class="w15">в</b><b class="w16">настоя</b></span></div>
<div class="r" style="top:569px"><i class="cb"></i><span class="c1">3087</span><i class="e1"></i><span class="c2" style="letter-spacing:0.044px">Гентамицин</span><span class="c3">0</span><span class="c4">01.01.2024</span><span class="c5">14</span><i class="e2"></i><span class="c6"><b class="w0">Взвешенные</b><b class="w1">вещества</b><b class="w2">(разнородные</b><b class="w3">по</b><b class="w4">составу</b><b class="w5">твердые</b><b class="w6">частицы,</b><b class="w7">содержащиеся</b><b class="w8">в</b><b class="w9">выбросах</b><b class="w10">загрязняющих</b><b class="w11">веществ</b><b class="w12">и</b><b class="w13">не</b><b class="w14">поименованные</b><b class="w15">в</b><b class="w16">настоя</b></span></div>
<div class="r" style="top:585px"><i class="cb"></i><span class="c1">3083</span><i class="e1"></i><span class="c2" style="letter-spacing:0.031px">Красители антрахиновые дисперсные</span><span class="c3">0</span><span class="c4">01.01.2024</span><span class="c5">14</span><i class="e2"></i><span class="c6"><b class="w0">Взвешенные</b><b class="w1">вещества</b><b class="w2">(разнородные</b><b class="w3">по</b><b class="w4">составу</b><b class="w5">твердые</b><b class="w6">частицы,</b><b class="w7">содержащиеся</b><b class="w8">в</b><b class="w9">выбросах</b><b class="w10">загрязняющих</b><b class="w11">веществ</b><b class="w12">и</b><b class="w13">не</b><b class="w14">поименованные</b><b class="w15">в</b><b class="w16">настоя</b></span></div>
<div class="r" style="top:601px"><i class="cb"></i><span class="c1">3082</span><i class="e1"></i><span class="c2" style="letter-spacing:0.235px">бета-Циклодекстрин</span><span class="c3">0</span><span class="c4">01.01.2024</span><span class="c5">14</span><i class="e2"></i><span class="c6"><b class="w0">Взвешенные</b><b class="w1">вещества</b><b class="w2">(разнородные</b><b class="w3">по</b><b class="w4">составу</b><b class="w5">твердые</b><b class="w6">частицы,</b><b class="w7">содержащиеся</b><b class="w8">в</b><b class="w9">выбросах</b><b class="w10">загрязняющих</b><b class="w11">веществ</b><b class="w12">и</b><b class="w13">не</b><b class="w14">поименованные</b><b class="w15">в</b><b class="w16">настоя</b></span></div>
<div class="r" style="top:617px"><i class="cb"></i><span class="c1">3076</span><i class="e1"></i><span class="c2" style="letter-spacing:-0.046px">Мобильтерм-605</span><span class="c3">3</span><span class="c4">01.01.2024</span><span class="c5">14</span><i class="e2"></i><span class="c6"><b class="w0">Взвешенные</b><b class="w1">вещества</b><b class="w2">(разнородные</b><b class="w3">по</b><b class="w4">составу</b><b class="w5">твердые</b><b class="w6">частицы,</b><b class="w7">содержащиеся</b><b class="w8">в</b><b class="w9">выбросах</b><b class="w10">загрязняющих</b><b class="w11">веществ</b><b class="w12">и</b><b class="w13">не</b><b class="w14">поименованные</b><b class="w15">в</b><b class="w16">настоя</b></span></div>
<div class="r" style="top:633px"><i class="cb"></i><span class="c1">3069</span><i class="e1"></i><span class="c2" style="letter-spacing:0.486px">Гетинакс</span><span class="c3">0</span><span class="c4">01.01.2024</span><span class="c5">14</span><i class="e2"></i><span class="c6"><b class="w0">Взвешенные</b><b class="w1">вещества</b><b class="w2">(разнородные</b><b class="w3">по</b><b class="w4">составу</b><b class="w5">твердые</b><b class="w6">частицы,</b><b class="w7">содержащиеся</b><b class="w8">в</b><b class="w9">выбросах</b><b class="w10">загрязняющих</b><b class="w11">веществ</b><b class="w12">и</b><b class="w13">не</b><b class="w14">поименованные</b><b class="w15">в</b><b class="w16">настоя</b></span></div>
<div class="r" style="top:649px"><i class="cb"></i><span class="c1">3027</span><i class="e1"></i><span class="c2" style="letter-spacing:0.022px">Галантамин</span><span class="c3">0</span><span class="c4">01.01.2024</span><span class="c5">14</span><i class="e2"></i><span class="c6"><b class="w0">Взвешенные</b><b class="w1">вещества</b><b class="w2">(разнородные</b><b class="w3">по</b><b class="w4">составу</b><b class="w5">твердые</b><b class="w6">частицы,</b><b class="w7">содержащиеся</b><b class="w8">в</b><b class="w9">выбросах</b><b class="w10">загрязняющих</b><b class="w11">веществ</b><b class="w12">и</b><b class="w13">не</b><b class="w14">поименованные</b><b class="w15">в</b><b class="w16">настоя</b></span></div>
<div class="r" style="top:665px"><i class="cb"></i><span class="c1">3049</span><i class="e1"></i><span class="c2" style="letter-spacing:-0.050px">Ацетилфталилцеллюлоза</span><span class="c3">0</span><span class="c4">01.01.2024</span><span class="c5">14</span><i class="e2"></i><span class="c6"><b class="w0">Взвешенные</b><b class="w1">вещества</b><b class="w2">(разнородные</b><b class="w3">по</b><b class="w4">составу</b><b class="w5">твердые</b><b class="w6">частицы,</b><b class="w7">содержащиеся</b><b class="w8">в</b><b class="w9">выбросах</b><b class="w10">загрязняющих</b><b class="w11">веществ</b><b class="w12">и</b><b class="w13">не</b><b class="w14">поименованные</b><b class="w15">в</b><b class="w16">настоя</b></span></div>
<div class="r" style="top:681px"><i class="cb"></i><span class="c1">3048</span><i class="e1"></i><span class="c2" style="letter-spacing:-0.029px">Аспаркам</span><span class="c3">0</span><span class="c4">01.01.2024</span><span class="c5">14</span><i class="e2"></i><span class="c6"><b class="w0">Взвешенные</b><b class="w1">вещества</b><b class="w2">(разнородные</b><b class="w3">по</b><b class="w4">составу</b><b class="w5">твердые</b><b class="w6">частицы,</b><b class="w7">содержащиеся</b><b class="w8">в</b><b class="w9">выбросах</b><b class="w10">загрязняющих</b><b class="w11">веществ</b><b class="w12">и</b><b class="w13">не</b><b class="w14">поименованные</b><b class="w15">в</b><b class="w16">настоя</b></span></div>
<div class="r" style="top:697px"><i class="cb"></i><span class="c1">3047</span><i class="e1"></i><span class="c2" style="letter-spacing:-0.233px">Анмарин</span><span class="c3">0</span><span class="c4">01.01.2024</span><span class="c5">14</span><i class="e2"></i><span class="c6"><b class="w0">Взвешенные</b><b class="w1">вещества</b><b class="w2">(разнородные</b><b class="w3">по</b><b class="w4">составу</b><b class="w5">твердые</b><b class="w6">частицы,</b><b class="w7">содержащиеся</b><b class="w8">в</b><b class="w9">выбросах</b><b class="w10">загрязняющих</b><b class="w11">веществ</b><b class="w12">и</b><b class="w13">не</b><b class="w14">поименованные</b><b class="w15">в</b><b class="w16">настоя</b></span></div>
<div class="r" style="top:713px"><i class="cb"></i><span class="c1">3045</span><i class="e1"></i><span class="c2" style="letter-spacing:0.171px">Фталазол</span><span class="c3">4</span><span class="c4">01.01.2024</span><span class="c5">14</span><i class="e2"></i><span class="c6"><b class="w0">Взвешенные</b><b class="w1">вещества</b><b class="w2">(разнородные</b><b class="w3">по</b><b class="w4">составу</b><b class="w5">твердые</b><b class="w6">частицы,</b><b class="w7">содержащиеся</b><b class="w8">в</b><b class="w9">выбросах</b><b class="w10">загрязняющих</b><b class="w11">веществ</b><b class="w12">и</b><b class="w13">не</b><b class="w14">поименованные</b><b class="w15">в</b><b class="w16">настоя</b></span></div>
<div class="r" style="top:729px"><i class="cb"></i><span class="c1">3036</span><i class="e1"></i><span class="c2" style="letter-spacing:-0.026px">2-Гидроксиэтиловый эфир крахмала</span><span class="c3">0</span><span class="c4">01.01.2024</span><span class="c5">14</span><i class="e2"></i><span class="c6"><b class="w0">Взвешенные</b><b class="w1">вещества</b><b class="w2">(разнородные</b><b class="w3">по</b><b class="w4">составу</b><b class="w5">твердые</b><b class="w6">частицы,</b><b class="w7">содержащиеся</b><b class="w8">в</b><b class="w9">выбросах</b><b class="w10">загрязняющих</b><b class="w11">веществ</b><b class="w12">и</b><b class="w13">не</b><b class="w14">поименованные</b><b class="w15">в</b><b class="w16">настоя</b></span></div>
<div class="r" style="top:745px"><i class="cb"></i><span class="c1">3029</span><i class="e1"></i><span class="c2" style="letter-spacing:0.067px">Гризеофульвин</span><span class="c3">0</span><span class="c4">01.01.2024</span><span class="c5">14</span><i class="e2"></i><span class="c6"><b class="w0">Взвешенные</b><b class="w1">вещества</b><b class="w2">(разнородные</b><b class="w3">по</b><b class="w4">составу</b><b class="w5">твердые</b><b class="w6">частицы,</b><b class="w7">содержащиеся</b><b class="w8">в</b><b class="w9">выбросах</b><b class="w10">загрязняющих</b><b class="w11">веществ</b><b class="w12">и</b><b class="w13">не</b><b class="w14">поименованные</b><b class="w15">в</b><b class="w16">настоя</b></span></div>
<div class="r" style="top:761px"><i class="cb"></i><span class="c1">3091</span><i class="e1"></i><span class="c2" style="letter-spacing:0.045px">Натриевая соль хитозана</span><span class="c3">0</span><span class="c4">01.01.2024</span><span class="c5">14</span><i class="e2"></i><span class="c6"><b class="w0">Взвешенные</b><b class="w1">вещества</b><b class="w2">(разнородные</b><b class="w3">по</b><b class="w4">составу</b><b class="w5">твердые</b><b class="w6">частицы,</b><b class="w7">содержащиеся</b><b class="w8">в</b><b class="w9">выбросах</b><b class="w10">загрязняющих</b><b class="w11">веществ</b><b class="w12">и</b><b class="w13">не</b><b class="w14">поименованные</b><b class="w15">в</b><b class="w16">настоя</b></span></div>
</div>
<!-- status bar -->
<div class="a" style="left:1px;top:780px;width:1421px;height:2px;background:#fff"></div>
<div class="a" style="left:1px;top:782px;width:1421px;height:22px;background:#f0f0f0"></div>
<i style="left:150px;top:784px;width:1px;height:18px;background:#d7d7d7"></i>
<span style="left:2.5px;top:786px;height:16px;letter-spacing:0.28px">Вещество 1 из 923</span>
<span style="left:157px;top:786px;height:16px;letter-spacing:0.4px">Код вещества</span>
<svg class="a" style="left:1411px;top:794px" width="11" height="11" viewBox="0 0 11 11"><g fill="#bfbfbf"><rect x="8" y="0" width="2" height="2"/><rect x="5" y="3" width="2" height="2"/><rect x="8" y="3" width="2" height="2"/><rect x="2" y="6" width="2" height="2"/><rect x="5" y="6" width="2" height="2"/><rect x="8" y="6" width="2" height="2"/></g></svg>

</body></html>
